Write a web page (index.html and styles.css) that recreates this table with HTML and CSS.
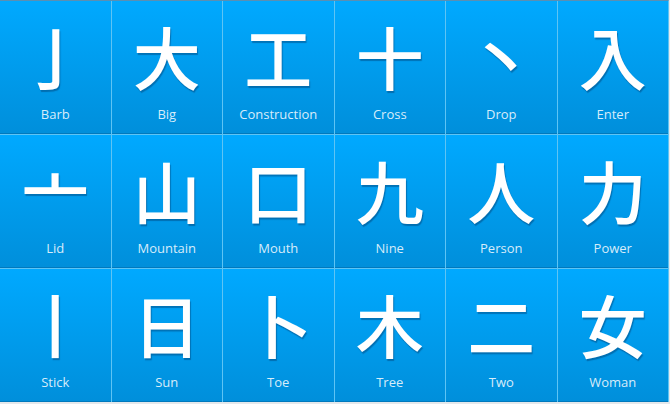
FILE: index.html
```html
<!DOCTYPE html>
<html lang="en">
<head>
<meta charset="utf-8">
<title>Kanji radicals</title>
<link rel="stylesheet" href="styles.css">
</head>
<body>
<div class="grid">
  <div class="cell"><span class="kanji">亅</span><span class="label">Barb</span></div>
  <div class="cell"><span class="kanji">大</span><span class="label">Big</span></div>
  <div class="cell"><span class="kanji">工</span><span class="label">Construction</span></div>
  <div class="cell"><span class="kanji">十</span><span class="label">Cross</span></div>
  <div class="cell"><span class="kanji">丶</span><span class="label">Drop</span></div>
  <div class="cell"><span class="kanji">入</span><span class="label">Enter</span></div>
  <div class="cell"><span class="kanji">亠</span><span class="label">Lid</span></div>
  <div class="cell"><span class="kanji">山</span><span class="label">Mountain</span></div>
  <div class="cell"><span class="kanji">口</span><span class="label">Mouth</span></div>
  <div class="cell"><span class="kanji">九</span><span class="label">Nine</span></div>
  <div class="cell"><span class="kanji">人</span><span class="label">Person</span></div>
  <div class="cell"><span class="kanji">力</span><span class="label">Power</span></div>
  <div class="cell"><span class="kanji">丨</span><span class="label">Stick</span></div>
  <div class="cell"><span class="kanji">日</span><span class="label">Sun</span></div>
  <div class="cell"><span class="kanji">卜</span><span class="label">Toe</span></div>
  <div class="cell"><span class="kanji">木</span><span class="label">Tree</span></div>
  <div class="cell"><span class="kanji">二</span><span class="label">Two</span></div>
  <div class="cell"><span class="kanji">女</span><span class="label">Woman</span></div>
</div>
</body>
</html>
```
FILE: styles.css
```css
html, body {
  margin: 0;
  padding: 0;
}
body {
  background: #e4e8eb;
  width: 670px;
  height: 404px;
  overflow: hidden;
}
.grid {
  width: 668px;
  display: grid;
  grid-template-columns: repeat(6, 1fr);
  grid-template-rows: repeat(3, 133px);
  gap: 1px;
  background: #5ec4f4;
  border-top: 1px solid #5a8fb2;
  border-right: 1px solid #5ec4f4;
}
.cell {
  display: flex;
  flex-direction: column;
  align-items: center;
  background: linear-gradient(to bottom, #00a9ff, #008fdb);
  border-bottom: 1px solid #0079bd;
  box-sizing: border-box;
}
.kanji {
  font-family: "Noto Sans CJK JP", sans-serif;
  font-weight: 500;
  font-size: 68px;
  line-height: 1;
  color: #ffffff;
  margin-top: 21px;
  height: 70px;
  text-shadow: 1px 2px 1px rgba(0, 60, 110, 0.45);
}
.label {
  font-family: "Open Sans", sans-serif;
  font-size: 13px;
  color: rgba(255, 255, 255, 0.85);
  margin-top: 13px;
}
```
